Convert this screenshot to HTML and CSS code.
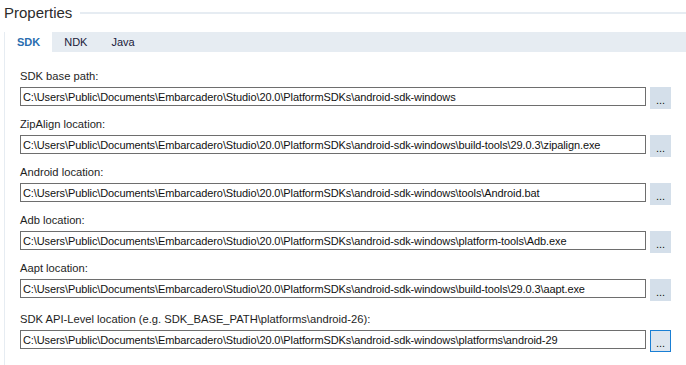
FILE: index.html
```html
<!DOCTYPE html>
<html lang="en">
<head>
    <meta charset="UTF-8">
    <title>Properties</title>
    <link rel="stylesheet" href="styles.css">
</head>
<body>

<div class="header">
    <span class="title">Properties</span>
    <div class="title-line"></div>
</div>

<div class="tabs">
    <div class="tab active">SDK</div>
    <div class="tab">NDK</div>
    <div class="tab">Java</div>
</div>

<div class="panel">
    <div class="field">
        <label class="label">SDK base path:</label>
        <div class="row">
            <input class="path" type="text" value="C:\Users\Public\Documents\Embarcadero\Studio\20.0\PlatformSDKs\android-sdk-windows">
            <button class="browse">...</button>
        </div>
    </div>
    <div class="field">
        <label class="label">ZipAlign location:</label>
        <div class="row">
            <input class="path" type="text" value="C:\Users\Public\Documents\Embarcadero\Studio\20.0\PlatformSDKs\android-sdk-windows\build-tools\29.0.3\zipalign.exe">
            <button class="browse">...</button>
        </div>
    </div>
    <div class="field">
        <label class="label">Android location:</label>
        <div class="row">
            <input class="path" type="text" value="C:\Users\Public\Documents\Embarcadero\Studio\20.0\PlatformSDKs\android-sdk-windows\tools\Android.bat">
            <button class="browse">...</button>
        </div>
    </div>
    <div class="field">
        <label class="label">Adb location:</label>
        <div class="row">
            <input class="path" type="text" value="C:\Users\Public\Documents\Embarcadero\Studio\20.0\PlatformSDKs\android-sdk-windows\platform-tools\Adb.exe">
            <button class="browse">...</button>
        </div>
    </div>
    <div class="field">
        <label class="label">Aapt location:</label>
        <div class="row">
            <input class="path" type="text" value="C:\Users\Public\Documents\Embarcadero\Studio\20.0\PlatformSDKs\android-sdk-windows\build-tools\29.0.3\aapt.exe">
            <button class="browse">...</button>
        </div>
    </div>
    <div class="field last">
        <label class="label">SDK API-Level location (e.g. SDK_BASE_PATH\platforms\android-26):</label>
        <div class="row">
            <input class="path" type="text" value="C:\Users\Public\Documents\Embarcadero\Studio\20.0\PlatformSDKs\android-sdk-windows\platforms\android-29">
            <button class="browse focused">...</button>
        </div>
    </div>
</div>

</body>
</html>
```

FILE: styles.css
```css
body {
    margin: 0;
    height: 365px;
    overflow: hidden;
    background-color: white;
    font-family: "Liberation Sans", Arial, sans-serif;
    font-size: 11.2px;
    color: #1e1e1e;
}

.header {
    display: flex;
    align-items: center;
    padding: 0 0 0 4px;
    height: 24px;
}

.title {
    font-size: 15px;
    color: #2b2b2b;
}

.title-line {
    flex: 1;
    height: 2px;
    margin-left: 8px;
    margin-top: 1px;
    background-color: #e6ecf2;
}

.tabs {
    display: flex;
    margin: 8px 0 0 4px;
    height: 20px;
    background-color: #e6ecf2;
}

.tab {
    padding: 0 12px;
    line-height: 20px;
    font-size: 11px;
    color: #1a1a3a;
}

.tab.active {
    background-color: white;
    color: #2a6eb0;
    font-weight: bold;
    margin-left: 1px;
}

.panel {
    margin-left: 4px;
    border-left: 1px solid #e6ecf2;
    padding: 16px 0 0 15px;
    height: 313px;
}

.field {
    margin-bottom: 7px;
}

.field.last {
    padding-top: 3px;
}

.label {
    display: block;
    line-height: 16px;
    margin-bottom: 3px;
}

.row {
    display: flex;
    align-items: flex-start;
}

.path {
    width: 626px;
    height: 19px;
    box-sizing: border-box;
    margin: 0;
    padding: 0 2px;
    border: 1px solid #6e6e6e;
    font-family: "Liberation Sans", Arial, sans-serif;
    font-size: 11px;
    letter-spacing: -0.1px;
    color: #111;
    outline: none;
}

.browse {
    width: 21px;
    height: 22px;
    margin-left: 4px;
    padding: 0 0 4px 0;
    box-sizing: border-box;
    border: none;
    background-color: #d4dfea;
    font-family: "Liberation Sans", Arial, sans-serif;
    font-size: 11px;
    color: #111;
    line-height: 10px;
    display: flex;
    align-items: flex-end;
    justify-content: center;
}

.browse.focused {
    border: 1px solid #1a7fd4;
    background-color: #dde5ee;
    padding-bottom: 3px;
}
```
